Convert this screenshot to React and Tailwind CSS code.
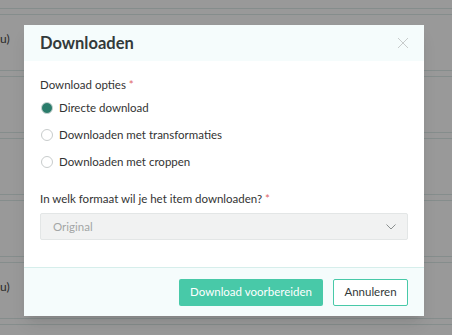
import React, { useState } from 'react';

const options = ['Directe download', 'Downloaden met transformaties', 'Downloaden met croppen'];

const Radio = ({ checked }) => (
  <span
    className={
      checked
        ? 'ml-px w-[12px] h-[12px] rounded-full border border-[#c9d3d1] bg-[#2a7c6b] shrink-0'
        : 'ml-px w-[12px] h-[12px] rounded-full border border-[#c8cccc] bg-white shrink-0'
    }
  />
);

const BackgroundRows = () => (
  <div className="flex flex-col pt-[8px]">
    {[0, 1, 2, 3, 4, 5].map((i) => (
      <div key={i}>
        <div className="h-[7px] border-y border-[#858d8c]" />
        <div className="h-[55px] pt-[18px] text-[12px] leading-none text-[#2a2a2a]">
          {i === 0 || i === 4 ? 'u)' : ''}
        </div>
      </div>
    ))}
  </div>
);

const App = () => {
  const [selected, setSelected] = useState(0);

  return (
    <div className="relative w-full h-[335px] overflow-hidden bg-[#999999] font-['Lato',sans-serif]">
      <BackgroundRows />

      {/* Modal */}
      <div className="absolute left-[24px] top-[25px] w-[400px] bg-white shadow-lg flex flex-col">
        <div className="h-[36px] bg-[#f5fcfc] flex items-center justify-between px-4">
          <h2 className="text-[16.5px] font-bold text-[#333a3a]">Downloaden</h2>
          <button className="w-[10px] h-[10px] text-[#c8cccc]">
            <svg viewBox="0 0 10 10" width="10" height="10" fill="none" stroke="currentColor" strokeWidth="1">
              <path d="M0 0 L10 10 M10 0 L0 10" />
            </svg>
          </button>
        </div>

        <div className="px-4 pt-[16px] pb-[27px] text-[11.5px] text-[#333]">
          <div className="h-4 leading-4">
            Download opties <span className="text-[#e0666a]">*</span>
          </div>
          <div className="mt-[7px] flex flex-col gap-[11px]">
            {options.map((opt, i) => (
              <label
                key={opt}
                onClick={() => setSelected(i)}
                className="h-4 flex items-center gap-[6px] leading-4 cursor-pointer"
              >
                <Radio checked={selected === i} />
                <span>{opt}</span>
              </label>
            ))}
          </div>
          <div className="mt-[21px] h-4 leading-4">
            In welk formaat wil je het item downloaden? <span className="text-[#e0666a]">*</span>
          </div>
          <div className="mt-[6px] h-[27px] bg-[#f1f2f2] border border-[#e3e6e6] rounded-[2px] flex items-center justify-between pl-3 pr-[11px]">
            <span className="text-[#a3a6a6]">Original</span>
            <svg viewBox="0 0 10 6" width="10" height="6" fill="none" stroke="#8a8f8f" strokeWidth="1">
              <path d="M0.5 0.5 L5 5 L9.5 0.5" />
            </svg>
          </div>
        </div>

        <div className="h-[49px] bg-[#f5fcfc] border-t border-[#d6eeeb] flex items-center justify-end gap-[10px] px-4">
          <button className="h-[27px] w-[144px] bg-[#48c9a8] text-white text-[11.5px] rounded-[2px]">
            Download voorbereiden
          </button>
          <button className="h-[27px] w-[75px] bg-white border border-[#48c9a8] text-[#333a3a] text-[11.5px] rounded-[2px]">
            Annuleren
          </button>
        </div>
      </div>
    </div>
  );
};

export default App;
